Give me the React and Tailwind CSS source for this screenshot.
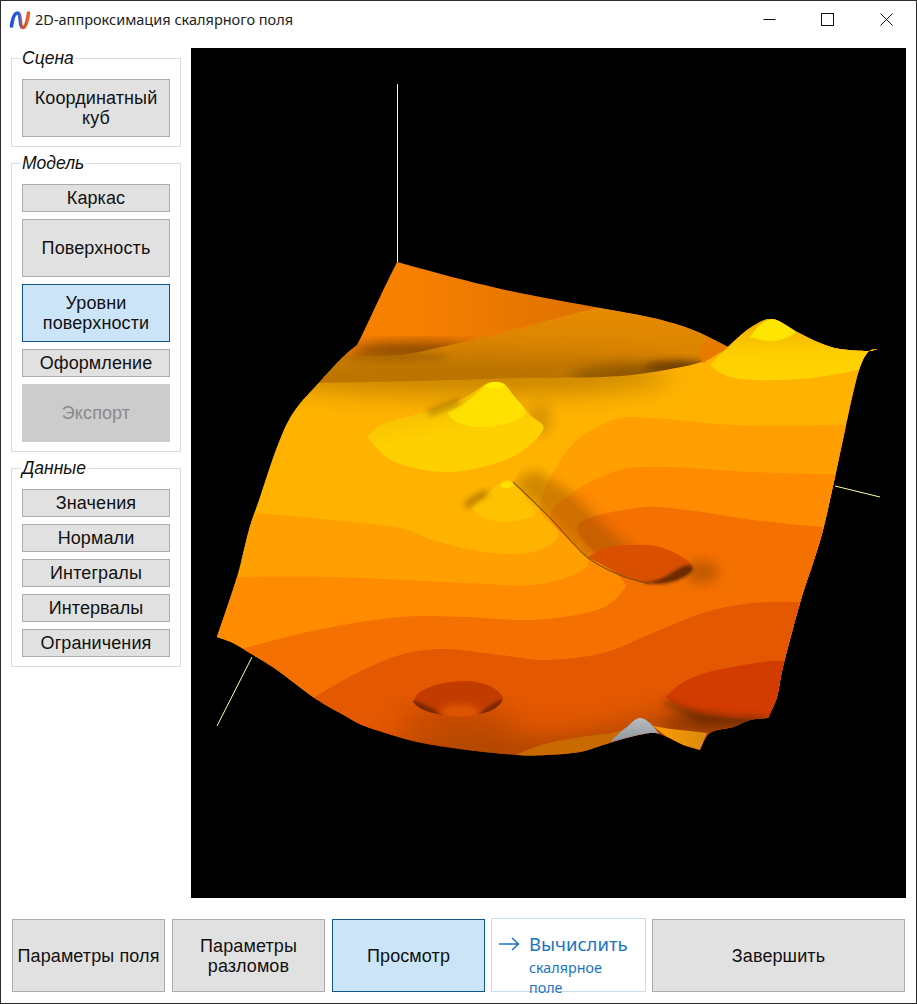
const Sans = "font-['Liberation_Sans',Arial,sans-serif]";

function Btn({ children, h = "h-[28px]", variant = "gray", w = "w-[148px]" }) {
  const tone =
    variant === "blue"
      ? "bg-[#cce4f7] border-[#11568c] text-[#111]"
      : variant === "off"
      ? "bg-[#cccccc] border-[#cccccc] text-[#8a8a8a]"
      : "bg-[#e1e1e1] border-[#adadad] text-[#111]";
  return (
    <div
      className={`${h} ${w} ${tone} ${Sans} text-[18px] shrink-0 border flex items-center justify-center text-center leading-[20px] tracking-[0.1px]`}
    >
      <span className="whitespace-nowrap">{children}</span>
    </div>
  );
}

function Group({ title, className, children }) {
  return (
    <fieldset className={`w-[170px] border border-[#dcdcdc] px-[10px] pb-[9px] ${className}`}>
      <legend className={`${Sans} -ml-[1px] px-[1px] text-[17.5px] italic leading-[18px] text-[#111]`}>{title}</legend>
      <div className="flex flex-col gap-[7px] pt-[12px]">{children}</div>
    </fieldset>
  );
}

function Logo() {
  return (
    <svg width="22" height="22" viewBox="0 0 22 22" className="shrink-0">
      <defs>
        <linearGradient id="lg" x1="0" y1="0" x2="1" y2="0">
          <stop offset="0" stopColor="#1f4fd8" />
          <stop offset="0.48" stopColor="#2f66dc" />
          <stop offset="0.6" stopColor="#d8502f" />
          <stop offset="1" stopColor="#e8602f" />
        </linearGradient>
      </defs>
      <path
        d="M2.5 17 C3.5 10 5.5 4 8.5 4 C12.5 4 10 18.5 14 18.5 C17 18.5 18.5 11 19.5 4"
        fill="none"
        stroke="url(#lg)"
        strokeWidth="3.6"
        strokeLinecap="round"
      />
    </svg>
  );
}

// Catmull-Rom through the points, as bezier segments
function cr(p) {
  let d = "";
  for (let i = 0; i < p.length - 1; i++) {
    const a = p[i - 1] || p[i];
    const b = p[i];
    const c = p[i + 1];
    const e = p[i + 2] || c;
    d += ` C${b[0] + (c[0] - a[0]) / 6} ${b[1] + (c[1] - a[1]) / 6} ${c[0] - (e[0] - b[0]) / 6} ${c[1] - (e[1] - b[1]) / 6} ${c[0]} ${c[1]}`;
  }
  return d;
}
const open = (p) => `M${p[0][0]} ${p[0][1]}` + cr(p);
const band = (p, rest) => open(p) + " " + rest + " Z";
const blob = (p) => open([...p, p[0]]) + " Z";

const S =
  "M397 262" +
  cr([[397, 262], [460, 279], [520, 293], [600, 308], [653, 318], [693, 330], [728, 347]]) +
  cr([[728, 347], [750, 328], [772, 319], [797, 332], [820, 343], [840, 349], [867, 351], [878, 349]]) +
  cr([[878, 349], [868, 352], [860, 367], [853, 393], [845, 430], [835, 477], [823, 530], [813, 563], [800, 603], [783, 667], [777, 697], [768, 718]]) +
  cr([[768, 718], [750, 720], [733, 727], [710, 733], [700, 750]]) +
  cr([[700, 750], [683, 745], [667, 737], [653, 733], [630, 737], [603, 745], [580, 752], [547, 755], [517, 755], [467, 750], [417, 742], [367, 727], [340, 713], [313, 697], [277, 670], [250, 653], [233, 643], [217, 637]]) +
  cr([[217, 637], [237, 577], [249, 530], [260, 497], [277, 447], [293, 413], [317, 385], [343, 357], [357, 345]]) +
  cr([[357, 345], [363, 333], [380, 297], [397, 262]]) +
  " Z";

const pitA = [[413, 702], [420, 692], [440, 684], [467, 681], [490, 686], [502, 696], [500, 704], [487, 712], [460, 717], [433, 713], [420, 708]];

function Surface() {
  return (
    <svg viewBox="191 48 715 850" className="block w-[715px] h-[850px]">
      <defs>
        <clipPath id="sf"><path d={S} /></clipPath>
        <clipPath id="rightOfRidge"><path d="M513 482 L550 518 L587 557 L620 575 L653 583 L720 610 L900 610 V400 H560 Z" /></clipPath>
        <clipPath id="pitA"><path d={blob(pitA)} /></clipPath>
        <filter id="b1" x="-50%" y="-50%" width="200%" height="200%"><feGaussianBlur stdDeviation="1.5" /></filter>
        <filter id="b3" x="-50%" y="-50%" width="200%" height="200%"><feGaussianBlur stdDeviation="3" /></filter>
        <filter id="b6" x="-50%" y="-50%" width="200%" height="200%"><feGaussianBlur stdDeviation="6" /></filter>
        <filter id="b12" x="-50%" y="-50%" width="200%" height="200%"><feGaussianBlur stdDeviation="12" /></filter>
        <linearGradient id="midBand" x1="0.6" y1="0" x2="0.5" y2="1">
          <stop offset="0" stopColor="#e88c00" />
          <stop offset="1" stopColor="#c87a00" />
        </linearGradient>
        <linearGradient id="topBand" gradientUnits="userSpaceOnUse" x1="410" y1="0" x2="610" y2="0">
          <stop offset="0" stopColor="#f78000" />
          <stop offset="1" stopColor="#dc7000" />
        </linearGradient>
        <linearGradient id="hill1" x1="0.25" y1="0" x2="0.6" y2="1">
          <stop offset="0" stopColor="#eeb200" />
          <stop offset="0.6" stopColor="#ffd000" />
          <stop offset="1" stopColor="#ffcf00" />
        </linearGradient>
        <linearGradient id="hill3" x1="0" y1="0" x2="0" y2="1">
          <stop offset="0" stopColor="#eeb000" />
          <stop offset="0.6" stopColor="#ffd000" />
          <stop offset="1" stopColor="#ffd400" />
        </linearGradient>
        <linearGradient id="grey" x1="0" y1="0" x2="0" y2="1">
          <stop offset="0" stopColor="#b9bcc2" />
          <stop offset="1" stopColor="#8f949c" />
        </linearGradient>
        <linearGradient id="flap" x1="0" y1="0" x2="1" y2="0">
          <stop offset="0" stopColor="#ff9c00" />
          <stop offset="1" stopColor="#d88a10" />
        </linearGradient>
      </defs>

      <line x1="397.5" y1="84" x2="397.5" y2="262" stroke="#ffffa8" strokeWidth="1" />
      <line x1="835" y1="486" x2="880" y2="497" stroke="#ffffa0" strokeWidth="1" />
      <line x1="252" y1="657" x2="217" y2="726" stroke="#ffffa0" strokeWidth="1" />

      <g clipPath="url(#sf)">
        {/* top orange with the fold shadow */}
        <rect x="200" y="240" width="700" height="160" fill="url(#topBand)" />
        <ellipse cx="415" cy="350" rx="62" ry="7" fill="#643600" opacity="0.8" filter="url(#b6)" />

        {/* second band */}
        <path d={band([[300, 358], [343, 356], [400, 355], [450, 345], [500, 333], [550, 320], [600, 307]], "L900 300 V420 H300")} fill="url(#midBand)" />
        <ellipse cx="395" cy="357" rx="52" ry="5" fill="#7d4800" opacity="0.45" filter="url(#b3)" />
        <ellipse cx="640" cy="378" rx="70" ry="14" fill="#5f3400" opacity="0.7" filter="url(#b6)" />
        <ellipse cx="680" cy="367" rx="35" ry="7" fill="#4f2a00" opacity="0.6" filter="url(#b3)" />

        {/* main band */}
        <path d={band([[250, 384], [318, 383], [420, 381], [520, 378], [603, 377], [653, 372], [707, 360], [730, 340], [772, 300]], "L900 300 V560 H200 V384")} fill="#ffb300" />
        <ellipse cx="470" cy="376" rx="200" ry="20" fill="#a86a00" opacity="0.6" filter="url(#b12)" />
        <path d={open([[698, 353], [703, 344], [710, 338], [728, 347], [716, 355], [703, 363]]) + " Z"} fill="#e87a00" />

        {/* level bands */}
        <path d={band([[200, 511], [253, 513], [333, 520], [400, 528], [433, 540], [483, 552], [527, 553], [553, 543], [557, 530], [540, 505], [570, 447], [613, 420], [653, 418], [737, 425], [860, 425]], "V660 H200")} fill="#ffa000" />
        <path d={band([[200, 577], [237, 577], [333, 577], [467, 583], [533, 585], [577, 573], [587, 557], [550, 518], [577, 490], [620, 470], [670, 467], [753, 472], [850, 475]], "V700 H200")} fill="#ff8b00" />
        <path d={band([[200, 660], [245, 648], [317, 630], [400, 617], [467, 617], [533, 620], [597, 610], [623, 590], [620, 577], [577, 527], [637, 508], [687, 510], [753, 520], [830, 528]], "V730 H200")} fill="#f47000" />
        <path d={band([[290, 715], [315, 697], [357, 673], [400, 655], [443, 649], [500, 655], [547, 660], [603, 653], [653, 633], [703, 613], [753, 603], [805, 602]], "V770 H290")} fill="#e35800" />

        {/* bottom shading */}
        <path d="M340 760 C420 735 470 730 530 735 C580 738 630 722 670 712 L720 712 L780 722 L700 775 L400 775 Z" fill="#8a3a00" opacity="0.55" filter="url(#b12)" />
        <ellipse cx="458" cy="722" rx="58" ry="13" fill="#8a3300" opacity="0.4" filter="url(#b12)" />
        <ellipse cx="725" cy="722" rx="60" ry="9" fill="#6e2c00" opacity="0.6" filter="url(#b6)" />
        <path d="M505 760 C525 750 540 745 553 742 C575 737 595 735 613 733 L640 725 L650 760 Z" fill="#c96a00" />

        {/* pits */}
        <path d={blob(pitA)} fill="#c23c00" />
        <g clipPath="url(#pitA)">
          <ellipse cx="460" cy="712" rx="20" ry="8" fill="#de5400" filter="url(#b3)" />
          <path d="M408 699 C420 702 436 708 446 720 L415 716 Z M505 699 C495 701 484 708 474 720 L505 716 Z" fill="#6a2400" opacity="0.8" filter="url(#b1)" />
        </g>
        <path d={blob([[665, 697], [687, 680], [727, 668], [790, 663], [773, 707], [767, 719], [720, 717], [685, 709]])} fill="#d23c00" />
        <path d="M665 699 C680 708 705 713 735 716 L767 717 L765 724 L700 724 L665 705 Z" fill="#6a2a00" opacity="0.7" filter="url(#b3)" />

        {/* gray and flap */}
        <path d="M610 742 C616 736 622 730 627 727 C632 722 636 718 640 718 C645 718 650 723 653 726 L660 735 L633 737 Z" fill="url(#grey)" />
        <path d="M653 726 L670 729 L690 731 L707 733 L700 750 L683 745 L667 737 Z" fill="url(#flap)" />

        {/* hill 1 */}
        <ellipse cx="540" cy="420" rx="12" ry="16" fill="#8a5800" opacity="0.3" filter="url(#b6)" />
        <path d={open([[367, 437], [385, 423], [433, 410], [462, 399], [478, 389], [489, 383], [503, 383], [515, 397], [530, 415], [543, 430], [510, 458], [450, 472], [395, 462], [367, 437]]) + " Z"} fill="url(#hill1)" />
        <path d={open([[447, 413], [465, 403], [480, 390], [489, 383], [503, 384], [513, 395], [525, 413], [505, 424], [477, 427], [457, 422], [447, 413]]) + " Z"} fill="#ffe000" />
        <path d="M484 386 C489 381 500 381 505 385 L500 388 C495 389 489 388 484 386 Z" fill="#fff000" />
        <path d="M428 413 C438 410 450 405 459 401" fill="none" stroke="#5f3d00" strokeWidth="5" opacity="0.5" filter="url(#b3)" />

        {/* hill 2 */}
        <path d={open([[472, 508], [485, 496], [497, 485], [507, 480], [515, 484], [525, 498], [535, 514], [520, 520], [503, 522], [484, 518], [472, 508]]) + " Z"} fill="#ffc200" />
        <path d="M500 486 C504 480 511 480 514 485 L509 488 L503 488 Z" fill="#ffe000" />
        <path d="M466 507 C470 500 478 498 487 492" fill="none" stroke="#4f3200" strokeWidth="5" opacity="0.55" filter="url(#b3)" />

        {/* shade on the right side of the ridge */}
        <g clipPath="url(#rightOfRidge)">
          <path d="M513 482 L587 557 L650 585 L670 580 L610 530 L575 495 L535 470 Z" fill="#8a4a00" opacity="0.4" filter="url(#b6)" />
        </g>
        <path d={blob([[588, 557], [610, 547], [647, 545], [673, 552], [692, 566], [680, 578], [653, 583], [623, 575]])} fill="#d95000" />
        <ellipse cx="702" cy="572" rx="16" ry="12" fill="#9a4a00" opacity="0.55" filter="url(#b6)" />
        <path d="M692 566 C685 563 678 569 668 575 C660 580 652 582 642 583 C660 586 682 583 693 570 Z" fill="#3f1e00" opacity="0.7" filter="url(#b1)" />
        <path d={open([[513, 482], [550, 518], [587, 557], [620, 575], [650, 584]])} fill="none" stroke="#6b4200" strokeWidth="1.4" opacity="0.7" />

        {/* right hill */}
        <path d={open([[710, 365], [728, 347], [750, 328], [772, 319], [797, 332], [820, 343], [840, 349], [878, 349], [862, 368], [810, 378], [753, 380], [725, 375], [710, 365]]) + " Z"} fill="url(#hill3)" />
        <path d={open([[750, 337], [760, 325], [772, 319], [785, 324], [795, 332], [783, 339], [768, 341], [750, 337]]) + " Z"} fill="#ffe600" />
      </g>
    </svg>
  );
}

export default function App() {
  return (
    <div className="w-[917px] h-[1004px] bg-white border border-[#2b2b2b] flex flex-col overflow-hidden">
      <header className="h-[47px] shrink-0 flex items-center pl-[8px]">
        <div className="flex items-center -mt-[10px]">
          <Logo />
          <span className="ml-[4px] font-['Noto_Sans',sans-serif] text-[14.5px] text-[#222]">2D-аппроксимация скалярного поля</span>
        </div>
        <div className="ml-auto flex items-center -mt-[11px] pr-[23px]">
          <svg width="13" height="13" viewBox="0 0 13 13"><path d="M0.5 6.5H12.5" stroke="#111" /></svg>
          <svg width="13" height="13" viewBox="0 0 13 13" className="ml-[45px]"><rect x="0.5" y="0.5" width="12" height="12" fill="none" stroke="#111" /></svg>
          <svg width="13" height="13" viewBox="0 0 13 13" className="ml-[46px]"><path d="M0.5 0.5L12.5 12.5M12.5 0.5L0.5 12.5" stroke="#111" /></svg>
        </div>
      </header>

      <div className="flex h-[850px] shrink-0">
        <aside className="w-[190px] shrink-0 flex flex-col pl-[10px]">
          <Group title="Сцена" className="mt-[1px]">
            <Btn h="h-[58px]">Координатный<br />куб</Btn>
          </Group>
          <Group title="Модель" className="mt-[7px]">
            <Btn>Каркас</Btn>
            <Btn h="h-[58px]">Поверхность</Btn>
            <Btn h="h-[58px]" variant="blue">Уровни<br />поверхности</Btn>
            <Btn>Оформление</Btn>
            <Btn h="h-[58px]" variant="off">Экспорт</Btn>
          </Group>
          <Group title="Данные" className="mt-[7px]">
            <Btn>Значения</Btn>
            <Btn>Нормали</Btn>
            <Btn>Интегралы</Btn>
            <Btn>Интервалы</Btn>
            <Btn>Ограничения</Btn>
          </Group>
        </aside>
        <main className="w-[715px] h-[850px] bg-black shrink-0">
          <Surface />
        </main>
      </div>

      <footer className="flex items-start pl-[11px] pt-[21px] gap-[7px]">
        <Btn h="h-[73px]" w="w-[153px]">Параметры поля</Btn>
        <Btn h="h-[73px]" w="w-[153px]">Параметры<br />разломов</Btn>
        <Btn h="h-[73px]" w="w-[153px]" variant="blue">Просмотр</Btn>
        <div className="h-[74px] w-[155px] -mt-[1px] -mx-[1px] shrink-0 border border-[#c5dff0] bg-white flex text-[#1a74c4] font-['Noto_Sans',sans-serif]">
          <svg width="21" height="14" viewBox="0 0 21 14" className="ml-[7px] mt-[18px] shrink-0">
            <path d="M0 7H19M13 1L19.5 7L13 13" fill="none" stroke="#1a74c4" strokeWidth="1.5" />
          </svg>
          <div className="ml-[9px] flex flex-col">
            <span className="text-[18.5px] leading-[24px] mt-[13px] whitespace-nowrap">Вычислить</span>
            <span className="text-[14.3px] leading-[20px] mt-[2px]">скалярное<br />поле</span>
          </div>
        </div>
        <Btn h="h-[73px]" w="w-[253px]">Завершить</Btn>
      </footer>
    </div>
  );
}
